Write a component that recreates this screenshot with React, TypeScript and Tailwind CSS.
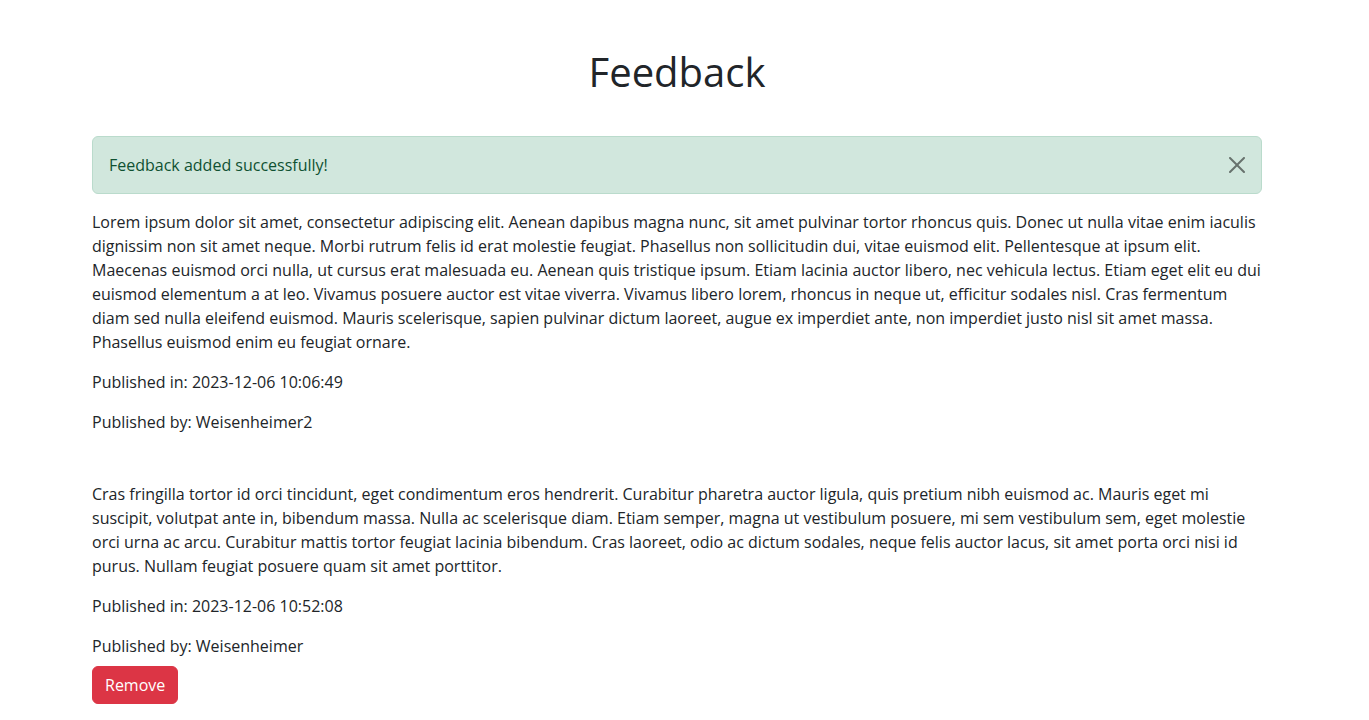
export default function App() {
  return (
    <div className="min-h-screen bg-white text-[#212529] text-base leading-6 font-['Open_Sans',sans-serif]">
      <div className="ml-[92px] w-[1170px] pt-12">
        <h1 className="text-center text-[40px] leading-[48px] font-medium mb-10">Feedback</h1>

        <div className="flex items-start justify-between rounded-md border border-[#badbcc] bg-[#d1e7dd] text-[#0f5132] mb-4">
          <span className="p-4">Feedback added successfully!</span>
          <button type="button" className="px-4 py-5 opacity-50" aria-label="Close">
            <svg viewBox="0 0 16 16" className="h-4 w-4" fill="#000">
              <path d="M.293.293a1 1 0 0 1 1.414 0L8 6.586 14.293.293a1 1 0 1 1 1.414 1.414L9.414 8l6.293 6.293a1 1 0 0 1-1.414 1.414L8 9.414l-6.293 6.293a1 1 0 0 1-1.414-1.414L6.586 8 .293 1.707a1 1 0 0 1 0-1.414z" />
            </svg>
          </button>
        </div>

        <div className="mb-12">
          <p className="mb-4">
            Lorem ipsum dolor sit amet, consectetur adipiscing elit. Aenean dapibus magna nunc, sit amet pulvinar tortor rhoncus quis. Donec ut nulla vitae enim iaculis dignissim non sit amet neque. Morbi rutrum felis id erat molestie feugiat. Phasellus non sollicitudin dui, vitae euismod elit. Pellentesque at ipsum elit. Maecenas euismod orci nulla, ut cursus erat malesuada eu. Aenean quis tristique ipsum. Etiam lacinia auctor libero, nec vehicula lectus. Etiam eget elit eu dui euismod elementum a at leo. Vivamus posuere auctor est vitae viverra. Vivamus libero lorem, rhoncus in neque ut, efficitur sodales nisl. Cras fermentum diam sed nulla eleifend euismod. Mauris scelerisque, sapien pulvinar dictum laoreet, augue ex imperdiet ante, non imperdiet justo nisl sit amet massa. Phasellus euismod enim eu feugiat ornare.
          </p>
          <p className="mb-4">Published in: 2023-12-06 10:06:49</p>
          <p className="mb-4">Published by: Weisenheimer2</p>
        </div>

        <div>
          <p className="mb-4">
            Cras fringilla tortor id orci tincidunt, eget condimentum eros hendrerit. Curabitur pharetra auctor ligula, quis pretium nibh euismod ac. Mauris eget mi suscipit, volutpat ante in, bibendum massa. Nulla ac scelerisque diam. Etiam semper, magna ut vestibulum posuere, mi sem vestibulum sem, eget molestie orci urna ac arcu. Curabitur mattis tortor feugiat lacinia bibendum. Cras laoreet, odio ac dictum sodales, neque felis auctor lacus, sit amet porta orci nisi id purus. Nullam feugiat posuere quam sit amet porttitor.
          </p>
          <p className="mb-4">Published in: 2023-12-06 10:52:08</p>
          <p className="mb-2">Published by: Weisenheimer</p>
          <button type="button" className="rounded-md border border-[#dc3545] bg-[#dc3545] px-3 py-1.5 text-white">
            Remove
          </button>
        </div>
      </div>
    </div>
  );
}
